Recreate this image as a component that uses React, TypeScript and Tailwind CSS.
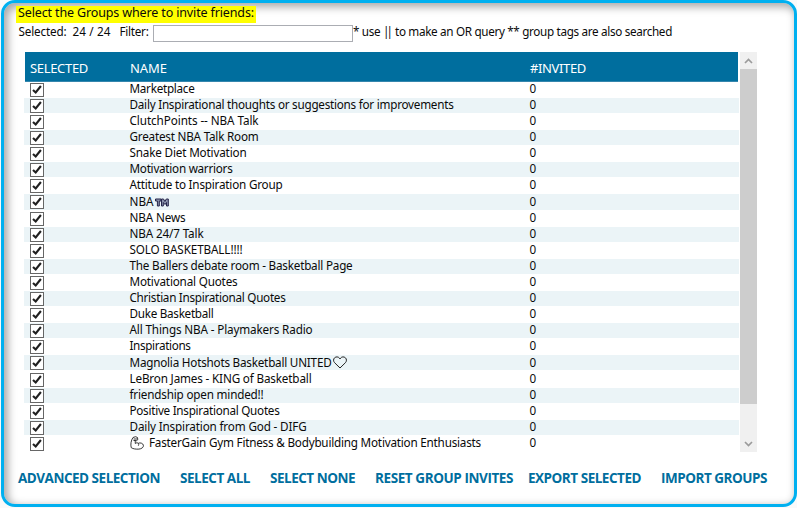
import { useLayoutEffect, useRef } from "react";

type Group = { name: string; width: number; icon?: "tm" | "heart" | "arm"; tall?: boolean };

const groups: Group[] = [
  { name: "Marketplace", width: 65 },
  { name: "Daily Inspirational thoughts or suggestions for improvements", width: 324 },
  { name: "ClutchPoints -- NBA Talk", width: 129 },
  { name: "Greatest NBA Talk Room", width: 129 },
  { name: "Snake Diet Motivation", width: 117 },
  { name: "Motivation warriors", width: 103 },
  { name: "Attitude to Inspiration Group", width: 153 },
  { name: "NBA", width: 24, icon: "tm", tall: true },
  { name: "NBA News", width: 56 },
  { name: "NBA 24/7 Talk", width: 74 },
  { name: "SOLO BASKETBALL!!!!", width: 113 },
  { name: "The Ballers debate room - Basketball Page", width: 223 },
  { name: "Motivational Quotes", width: 108 },
  { name: "Christian Inspirational Quotes", width: 156 },
  { name: "Duke Basketball", width: 84 },
  { name: "All Things NBA - Playmakers Radio", width: 183 },
  { name: "Inspirations", width: 61 },
  { name: "Magnolia Hotshots Basketball UNITED", width: 202, icon: "heart", tall: true },
  { name: "LeBron James - KING of Basketball", width: 182 },
  { name: "friendship open minded!!", width: 134 },
  { name: "Positive Inspirational Quotes", width: 150 },
  { name: "Daily Inspiration from God - DIFG", width: 177 },
  { name: "FasterGain Gym Fitness & Bodybuilding Motivation Enthusiasts", width: 332, icon: "arm" },
];

const actions = [
  { label: "ADVANCED SELECTION", width: 142, gap: "ml-0" },
  { label: "SELECT ALL", width: 70, gap: "ml-5" },
  { label: "SELECT NONE", width: 85, gap: "ml-5" },
  { label: "RESET GROUP INVITES", width: 138, gap: "ml-5" },
  { label: "EXPORT SELECTED", width: 113, gap: "ml-[15px]" },
  { label: "IMPORT GROUPS", width: 106, gap: "ml-5" },
];

/** Tracks a single line of text so that it fills the given width. */
function Line({ text, width, className = "" }: { text: string; width: number; className?: string }) {
  const ref = useRef<HTMLSpanElement>(null);
  useLayoutEffect(() => {
    const el = ref.current;
    if (!el) return;
    el.style.letterSpacing = "0px";
    const natural = el.getBoundingClientRect().width;
    el.style.letterSpacing = `${(width - natural) / text.length}px`;
  }, [text, width]);
  return (
    <span ref={ref} className={`inline-block shrink-0 whitespace-pre ${className}`}>
      {text}
    </span>
  );
}

function Checkbox() {
  return (
    <span className="flex size-[14px] shrink-0 items-center justify-center border border-[#666] bg-white">
      <svg viewBox="0 0 12 12" className="size-3" fill="none" stroke="#202020">
        <path d="M2 5.900 4.700 8.500 9.900 2" strokeWidth="2.1" />
      </svg>
    </span>
  );
}

function Trademark() {
  return (
    <svg viewBox="0 0 14 9" className="h-[9px] w-[14px]" fill="#8d94ad" stroke="#25254a" strokeWidth="1">
      <path d="M.5 1H6v2H4.3v5H2.4V3H.5zM6.500 8V1h2l1.400 2.500L11.300 1h2v7h-1.800V4.500L10 6.500 8.300 4.500V8z" />
    </svg>
  );
}

function Heart() {
  return (
    <svg viewBox="0 0 14 13" className="h-[13px] w-[14px]" fill="none" stroke="#222" strokeWidth="1">
      <path d="M7 12 1.500 6.600C.2 5.200.3 3 1.600 1.800 3 .5 5.300.6 6.400 2.100L7 3l.6-.9C8.700.6 11 .5 12.400 1.800c1.300 1.200 1.400 3.400.1 4.800z" />
    </svg>
  );
}

function Arm() {
  return (
    <svg viewBox="0 0 14 14" className="h-[14px] w-[14px]" fill="none" stroke="#222" strokeWidth="0.9" strokeLinejoin="round">
      <path d="M3 1.500 5.600.7l1.900.8.3 2.200-1.600 1.200-1-.5.100 3.100c1-.9 2.100-.9 2.900-.2 2-.9 4.700-.1 5.200 1.900.4 2.200-1.900 3.700-4.500 3.900-2.700.2-5.900-.1-7.700-1.500C.4 8.500 1 4.400 3 1.500z" />
      <path d="M3.600 3h3.700M3.500 4.500h2M8.200 7.300c.7.900.6 1.800 0 2.500" />
    </svg>
  );
}

function Chevron({ up = false }: { up?: boolean }) {
  return (
    <svg viewBox="0 0 9 6" className="h-[6px] w-[9px]" fill="none" stroke="#9b9b9b" strokeWidth="1.700">
      <path d={up ? "M1 5 4.500 1.500 8 5" : "M1 1 4.500 4.500 8 1"} />
    </svg>
  );
}

export default function App() {
  return (
    <div className="h-[508px] w-[797px] overflow-hidden bg-[#fafafa] pl-px font-['Noto_Sans','Open_Sans',sans-serif] text-[11.7px] leading-[15px] text-[#0a0a0a]">
      <div className="h-[507px] w-[796px] rounded-[14px] border-[3px] border-[#00b0f0] bg-white shadow-[inset_3px_3px_9px_1px_rgba(0,0,0,0.34)]">
        <div className="flex h-full flex-col pt-[3px] pl-3">
          <div className="flex h-[17px] w-[240px] items-start bg-[#ffff00] pl-[2px] leading-[13px]">
            <Line text="Select the Groups where to invite friends:" width={236} className="text-[12.500px]" />
          </div>

          <div className="mt-[2px] flex h-[17px] items-start pl-[2.500px] leading-[13px]">
            <div className="w-[54px]"><Line text="Selected:" width={48} /></div>
            <div className="w-[47px]"><Line text="24 / 24" width={38} /></div>
            <div className="w-[33.500px]"><Line text="Filter:" width={29} /></div>
            <input aria-label="Filter" className="h-[17px] w-[200px] border border-[#abadb3] bg-white outline-none" />
            <div className="flex">
              <Line text="* use " width={30} />
              <Line text="||" width={7} className="mr-[3px]" />
              <Line text="to make an OR query ** group tags are also searched" width={277} className="ml-[2px]" />
            </div>
          </div>

          <div className="mt-[10px] ml-2 flex h-[400px]">
            <div className="w-[715px]">
              <div className="ml-px flex h-[30px] w-[713px] items-center border-b border-[#3586ad] bg-[#006e9e] pt-[2px] text-[13px] leading-4 text-white">
                <div className="w-[105px] pl-[5px]"><Line text="SELECTED" width={58} /></div>
                <div className="w-[400px]"><Line text="NAME" width={37} /></div>
                <Line text="#INVITED" width={56} />
              </div>
              {groups.map((g, i) => (
                <div key={g.name} className={`flex flex-col ${g.tall ? "h-[17px]" : "h-4"}`}>
                  <div className={`flex items-center pl-[6px] ${g.icon === "tm" ? "h-4" : "h-[15px]"} ${i % 2 ? "bg-[#ebf4f7]" : ""}`}>
                    <div className="w-[99.500px]"><Checkbox /></div>
                    <div className={`flex h-[15px] w-[400px] items-start ${g.icon === "heart" ? "leading-[15px]" : "leading-[13px]"}`}>
                      {g.icon === "arm" && <span className="mr-[5px] ml-[0.500px]"><Arm /></span>}
                      <Line text={g.name} width={g.width} />
                      {g.icon === "tm" && <span className="mt-[3px] ml-px"><Trademark /></span>}
                      {g.icon === "heart" && <span className="mt-px ml-px"><Heart /></span>}
                    </div>
                    <span className={`h-[15px] ${g.icon === "heart" ? "leading-[15px]" : "leading-[13px]"}`}>0</span>
                  </div>
                </div>
              ))}
            </div>
            <div className="ml-px flex h-[400px] w-[17px] flex-col bg-[#f0f0f0]">
              <div className="flex h-[17px] items-center justify-center"><Chevron up /></div>
              <div className="h-[335px] bg-[#cdcdcd]" />
              <div className="mt-auto flex h-[17px] items-center justify-center"><Chevron /></div>
            </div>
          </div>

          <div className="mt-[18px] flex pl-[2px] font-['Open_Sans','Noto_Sans',sans-serif] text-[13.5px] leading-4 font-bold text-[#006e9e]">
            {actions.map((a) => (
              <button key={a.label} className={`flex ${a.gap}`}>
                <Line text={a.label} width={a.width} />
              </button>
            ))}
          </div>
        </div>
      </div>
    </div>
  );
}
